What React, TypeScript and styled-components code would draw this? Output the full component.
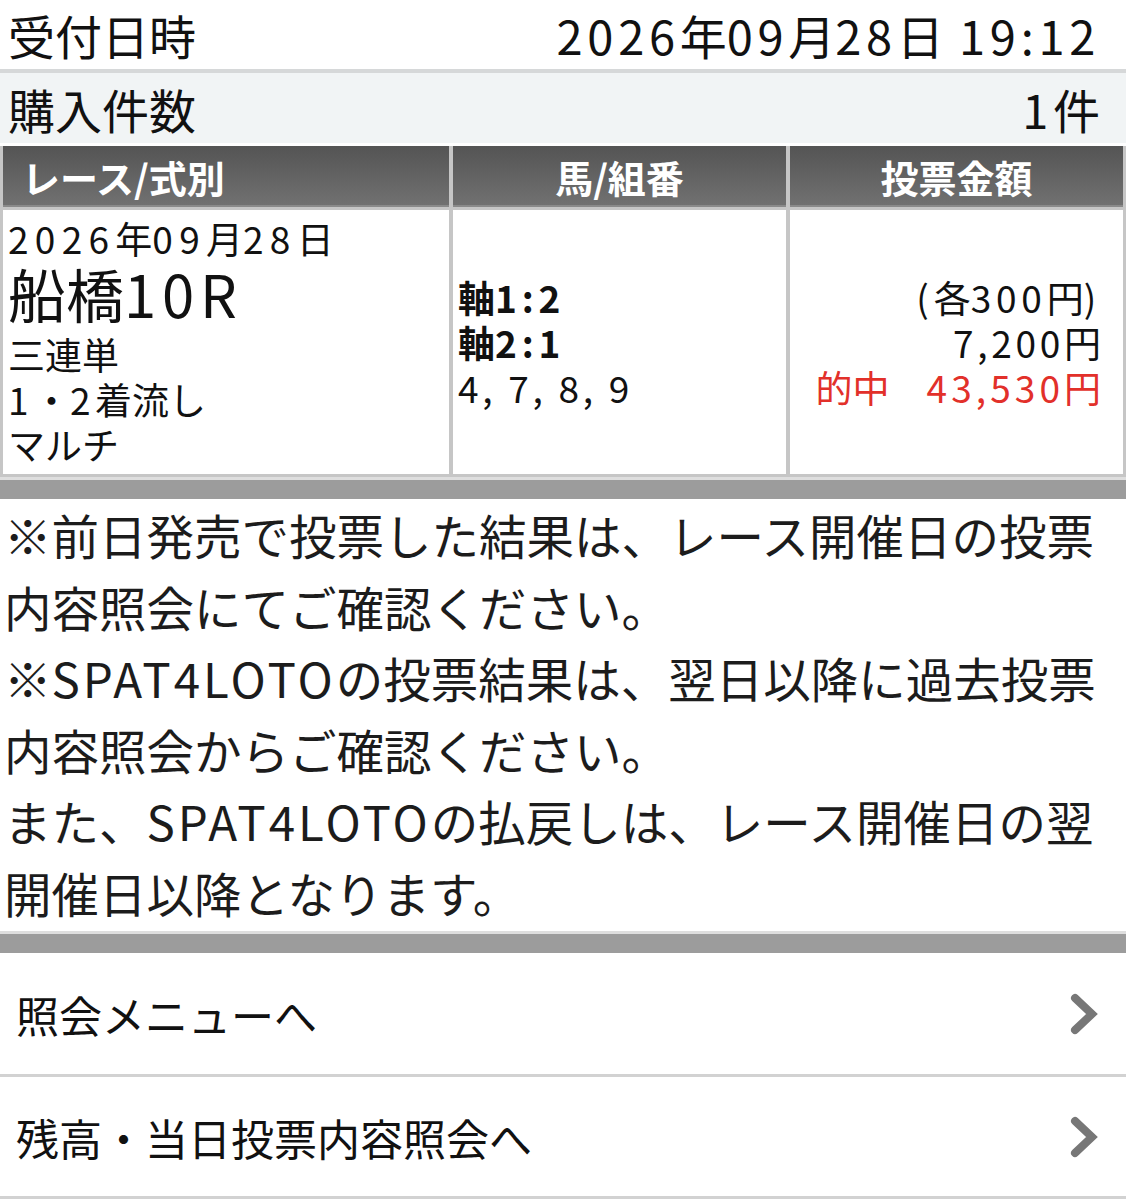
import React from 'react'
import { styled, createGlobalStyle } from 'styled-components'

const GlobalStyle = createGlobalStyle`
    html, body {
        margin: 0;
        padding: 0;
        background: #fff;
    }
    body {
        font-family: "Noto Sans CJK JP", "Noto Sans", sans-serif;
        color: #111;
    }
`

const Page = styled.div`
    width: 1126px;
    display: flex;
    flex-direction: column;
`

const InfoRow = styled.div<{ $shade?: boolean }>`
    height: ${p => (p.$shade ? '70px' : '69px')};
    display: flex;
    align-items: center;
    justify-content: space-between;
    padding: 0 26px 0 8px;
    font-size: 47px;
    line-height: 1;
    background: ${p => (p.$shade ? '#f1f4f5' : '#fff')};
    border-top: ${p => (p.$shade ? '4px solid #d6d8d9' : 'none')};
    border-bottom: ${p => (p.$shade ? '3px solid #fff' : 'none')};
`

// digits in the reference font are wider than Noto's, so space them out
const Num = styled.span<{ $ls?: number }>`
    letter-spacing: ${p => p.$ls ?? 0.12}em;
`

const Latin = styled.span`
    letter-spacing: 3px;
`

const NUM_RUN = /([0-9:,() ]+)/

const nums = (text: string, ls?: number) =>
    text.split(NUM_RUN).map((part, i) =>
        i % 2 === 1 ? <Num key={i} $ls={ls}>{part}</Num> : part
    )

const Table = styled.div`
    display: grid;
    grid-template-columns: 446px 333px 333px;
    column-gap: 4px;
    row-gap: 3px;
    padding: 0 3px 3px 3px;
    background: #c6c6c6;
`

const HeadCell = styled.div<{ $align?: string }>`
    height: 61px;
    display: flex;
    align-items: center;
    justify-content: ${p => p.$align || 'center'};
    padding: 0 19px;
    color: #fff;
    font-weight: 700;
    font-size: 38px;
    background: linear-gradient(#545454, #727272);
    box-shadow: inset 0 -2px 0 #8a8a8a;
`

const BodyCell = styled.div<{ $align?: string }>`
    background: #fff;
    display: flex;
    flex-direction: column;
    justify-content: ${p => (p.$align === 'top' ? 'flex-start' : 'center')};
    align-items: ${p => (p.$align === 'right' ? 'flex-end' : 'flex-start')};
    padding: ${p => (p.$align === 'right' ? '0 22px 0 8px' : p.$align === 'top' ? '6px 5px 7px' : '0 5px')};
    font-size: 37px;
    line-height: 45px;
    white-space: pre;
`

const RaceName = styled.div`
    font-size: 58px;
    line-height: 64px;
    margin-bottom: 7px;
`

const Bold = styled.div`
    font-weight: 700;
`

const Hit = styled.div`
    color: #e2302a;
`

const GrayBar = styled.div`
    height: 19px;
    background: #9c9c9c;
    border-top: 3px solid #dedede;
`

const Notes = styled.div`
    padding: 0 4px 3px 4px;
    font-size: 47.5px;
    line-height: 71.5px;
    color: #1c1c1c;
    white-space: nowrap;
`

const MenuItem = styled.div<{ $h: number }>`
    height: ${p => p.$h}px;
    display: flex;
    align-items: center;
    justify-content: space-between;
    padding: 0 28px 0 16px;
    font-size: 43px;
    border-bottom: 3px solid #d2d2d2;
`

const Chevron = () => (
    <svg width="28" height="42" viewBox="0 0 28 42">
        <polyline points="5,5 22,21 5,37" fill="none" stroke="#777" strokeWidth="8" strokeLinecap="round" strokeLinejoin="miter" />
    </svg>
)

const App: React.FC = () => {
    return (<>
        <GlobalStyle />
        <Page>
            <InfoRow>
                <span>受付日時</span>
                <span>{nums('2026年09月28日 19:12', 0.1)}</span>
            </InfoRow>
            <InfoRow $shade>
                <span>購入件数</span>
                <span>{nums('1件', 0.1)}</span>
            </InfoRow>
            <Table>
                <HeadCell $align="flex-start">レース/式別</HeadCell>
                <HeadCell>馬/組番</HeadCell>
                <HeadCell>投票金額</HeadCell>
                <BodyCell $align="top">
                    <div>{nums('2026年09月28日', 0.17)}</div>
                    <RaceName>船橋<Num $ls={0.1}>10R</Num></RaceName>
                    <div>三連単</div>
                    <div>{nums('1・2着流し')}</div>
                    <div>マルチ</div>
                </BodyCell>
                <BodyCell>
                    <Bold>{nums('軸1:2', 0.13)}</Bold>
                    <Bold>{nums('軸2:1', 0.13)}</Bold>
                    <div>{nums('4, 7, 8, 9', 0.1)}</div>
                </BodyCell>
                <BodyCell $align="right">
                    <div>{nums('(各300円)', 0.13)}</div>
                    <div>{nums('7,200円', 0.1)}</div>
                    <Hit>{nums('的中　43,530円', 0.11)}</Hit>
                </BodyCell>
            </Table>
            <GrayBar />
            <Notes>
                ※前日発売で投票した結果は、レース開催日の投票<br />
                内容照会にてご確認ください。<br />
                ※<Latin>SPAT4LOTO</Latin>の投票結果は、翌日以降に過去投票<br />
                内容照会からご確認ください。<br />
                また、<Latin>SPAT4LOTO</Latin>の払戻しは、レース開催日の翌<br />
                開催日以降となります。
            </Notes>
            <GrayBar />
            <MenuItem $h={121}>
                <span>照会メニューへ</span>
                <Chevron />
            </MenuItem>
            <MenuItem $h={119}>
                <span>残高・当日投票内容照会へ</span>
                <Chevron />
            </MenuItem>
        </Page>
    </>
    )
}

export default App
